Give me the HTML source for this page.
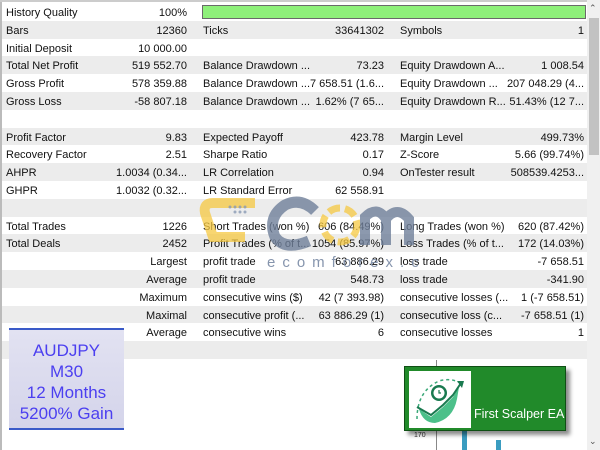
<!DOCTYPE html>
<html><head><meta charset="utf-8"><style>
*{margin:0;padding:0;box-sizing:border-box}
body{width:600px;height:450px;overflow:hidden;background:#fff;font-family:"Liberation Sans",sans-serif;font-size:11px;color:#111;position:relative}
.row{position:absolute;left:2px;width:585px;height:17.8px;line-height:17.8px}
.g{background:#ececec}
.row span{position:absolute;white-space:nowrap;top:2px}
.l1{left:4px}.v1{right:400px;text-align:right}
.l2{left:201px}.v2{right:203px;text-align:right}
.l3{left:398px}.v3{right:3px;text-align:right}
</style></head><body>
<div style="position:absolute;left:0;top:0;width:2px;height:450px;background:#bbb"></div>
<div style="position:absolute;left:0;top:0;width:600px;height:2px;background:#ccc"></div>
<div style="position:absolute;left:587px;top:0;width:13px;height:450px;background:#f0f0f0"></div>
<div style="position:absolute;left:589px;top:18px;width:10px;height:137px;background:#c2c2c2"></div>
<div style="position:absolute;left:589px;top:3px;font-size:9px;color:#555">&#8963;</div>
<div style="position:absolute;left:589px;top:436px;font-size:9px;color:#555">&#8964;</div>

<div class="row" style="top:3px"><span class="l1">History Quality</span><span class="v1">100%</span></div>
<div style="position:absolute;left:202px;top:5px;width:384px;height:14px;background:#8ef07a;border:1px solid #6a6a6a"></div>
<div class="row g" style="top:20.8px"><span class="l1">Bars</span><span class="v1">12360</span><span class="l2">Ticks</span><span class="v2">33641302</span><span class="l3">Symbols</span><span class="v3">1</span></div>
<div class="row" style="top:38.6px"><span class="l1">Initial Deposit</span><span class="v1">10 000.00</span></div>
<div class="row g" style="top:56.4px"><span class="l1">Total Net Profit</span><span class="v1">519 552.70</span><span class="l2">Balance Drawdown ...</span><span class="v2">73.23</span><span class="l3">Equity Drawdown A...</span><span class="v3">1 008.54</span></div>
<div class="row" style="top:74.2px"><span class="l1">Gross Profit</span><span class="v1">578 359.88</span><span class="l2">Balance Drawdown ...</span><span class="v2">7 658.51 (1.6...</span><span class="l3">Equity Drawdown ...</span><span class="v3">207 048.29 (4...</span></div>
<div class="row g" style="top:92px"><span class="l1">Gross Loss</span><span class="v1">-58 807.18</span><span class="l2">Balance Drawdown ...</span><span class="v2">1.62% (7 65...</span><span class="l3">Equity Drawdown R...</span><span class="v3">51.43% (12 7...</span></div>
<div class="row g" style="top:127.6px"><span class="l1">Profit Factor</span><span class="v1">9.83</span><span class="l2">Expected Payoff</span><span class="v2">423.78</span><span class="l3">Margin Level</span><span class="v3">499.73%</span></div>
<div class="row" style="top:145.4px"><span class="l1">Recovery Factor</span><span class="v1">2.51</span><span class="l2">Sharpe Ratio</span><span class="v2">0.17</span><span class="l3">Z-Score</span><span class="v3">5.66 (99.74%)</span></div>
<div class="row g" style="top:163.2px"><span class="l1">AHPR</span><span class="v1">1.0034 (0.34...</span><span class="l2">LR Correlation</span><span class="v2">0.94</span><span class="l3">OnTester result</span><span class="v3">508539.4253...</span></div>
<div class="row" style="top:181px"><span class="l1">GHPR</span><span class="v1">1.0032 (0.32...</span><span class="l2">LR Standard Error</span><span class="v2">62 558.91</span></div>
<div class="row g" style="top:198.8px"></div>
<div class="row" style="top:216.6px"><span class="l1">Total Trades</span><span class="v1">1226</span><span class="l2">Short Trades (won %)</span><span class="v2">606 (84.49%)</span><span class="l3">Long Trades (won %)</span><span class="v3">620 (87.42%)</span></div>
<div class="row g" style="top:234.4px"><span class="l1">Total Deals</span><span class="v1">2452</span><span class="l2">Profit Trades (% of t...</span><span class="v2">1054 (85.97%)</span><span class="l3">Loss Trades (% of t...</span><span class="v3">172 (14.03%)</span></div>
<div class="row" style="top:252.2px"><span class="v1">Largest</span><span class="l2">profit trade</span><span class="v2">63 886.29</span><span class="l3">loss trade</span><span class="v3">-7 658.51</span></div>
<div class="row g" style="top:270px"><span class="v1">Average</span><span class="l2">profit trade</span><span class="v2">548.73</span><span class="l3">loss trade</span><span class="v3">-341.90</span></div>
<div class="row" style="top:287.8px"><span class="v1">Maximum</span><span class="l2">consecutive wins ($)</span><span class="v2">42 (7 393.98)</span><span class="l3">consecutive losses (...</span><span class="v3">1 (-7 658.51)</span></div>
<div class="row g" style="top:305.6px"><span class="v1">Maximal</span><span class="l2">consecutive profit (...</span><span class="v2">63 886.29 (1)</span><span class="l3">consecutive loss (c...</span><span class="v3">-7 658.51 (1)</span></div>
<div class="row" style="top:323.4px"><span class="v1">Average</span><span class="l2">consecutive wins</span><span class="v2">6</span><span class="l3">consecutive losses</span><span class="v3">1</span></div>
<div class="row g" style="top:341.2px"></div>

<svg style="position:absolute;left:195px;top:195px" width="230" height="80">
<path d="M60 8 H18 Q8 8 10 18 L18 42 H50" fill="none" stroke="#f5c842" stroke-width="10" opacity="0.75"/>
<g fill="#8a9ab5" opacity="0.8"><circle cx="35" cy="12" r="1.5"/><circle cx="40" cy="12" r="1.5"/><circle cx="45" cy="12" r="1.5"/><circle cx="50" cy="12" r="1.5"/><circle cx="40" cy="17" r="1.5"/><circle cx="45" cy="17" r="1.5"/><circle cx="50" cy="17" r="1.5"/></g>
<path d="M120 16 Q106 2 90 10 Q72 22 80 42 Q90 56 114 46" fill="none" stroke="#6f7f9a" stroke-width="11" opacity="0.8"/>
<circle cx="145" cy="30" r="17" fill="none" stroke="#f5c842" stroke-width="7" stroke-dasharray="12 5" opacity="0.75"/>
<path d="M170 50 V22 Q182 10 191 24 V50 M191 24 Q202 10 214 24 V50" fill="none" stroke="#6f7f9a" stroke-width="10" opacity="0.8"/>
<text x="72" y="72" font-family="Liberation Sans" font-size="15" letter-spacing="7" fill="#7a8aa5" opacity="0.9">ecomforex.com</text>
</svg>

<div style="position:absolute;left:436px;top:360px;width:1px;height:90px;background:#888"></div>
<div style="position:absolute;left:414px;top:432px;font-size:7px;color:#333">170</div>
<div style="position:absolute;left:462px;top:425px;width:5px;height:25px;background:#3a9cc0"></div>
<div style="position:absolute;left:496px;top:440px;width:5px;height:10px;background:#3a9cc0"></div>

<div style="position:absolute;left:9px;top:328px;width:115px;height:102px;background:linear-gradient(#e2e2f2,#d4d4ea);border-top:2px solid #3a5ac8;border-bottom:2px solid #3a5ac8;color:#4b3ff0;font-size:17px;text-align:center;line-height:21px;padding-top:10px">AUDJPY<br>M30<br>12 Months<br>5200% Gain</div>

<div style="position:absolute;left:404px;top:366px;width:162px;height:65px;background:#218a2a;border:1px solid #0f4f14;box-shadow:4px 4px 4px rgba(0,0,0,0.45)">
<div style="position:absolute;left:4px;top:4px;width:62px;height:57px;background:#fff">
<svg width="62" height="57" viewBox="0 0 62 57">
<path d="M8 48 Q8 20 30 10 Q44 6 54 14" fill="none" stroke="#3aa878" stroke-width="1.5" stroke-dasharray="3 3"/>
<path d="M10 38 L22 46 L34 36 L44 26 L50 16 L48 28 Q44 48 26 52 Q14 52 10 38Z" fill="#4cc08a"/>
<path d="M8 36 L22 44 L34 34 L44 24 L52 12" fill="none" stroke="#1a7a50" stroke-width="2"/>
<path d="M48 10 L55 10 L53 17Z" fill="#1a7a50"/>
<circle cx="30" cy="22" r="8" fill="#1a7a50"/><circle cx="30" cy="22" r="5.5" fill="#fff"/>
<path d="M30 19 V22 H32" stroke="#1a7a50" stroke-width="1.2" fill="none"/>
</svg></div>
<div style="position:absolute;left:69px;top:40px;color:#fff;font-size:12.5px;white-space:nowrap">First Scalper EA</div>
</div>
</body></html>
